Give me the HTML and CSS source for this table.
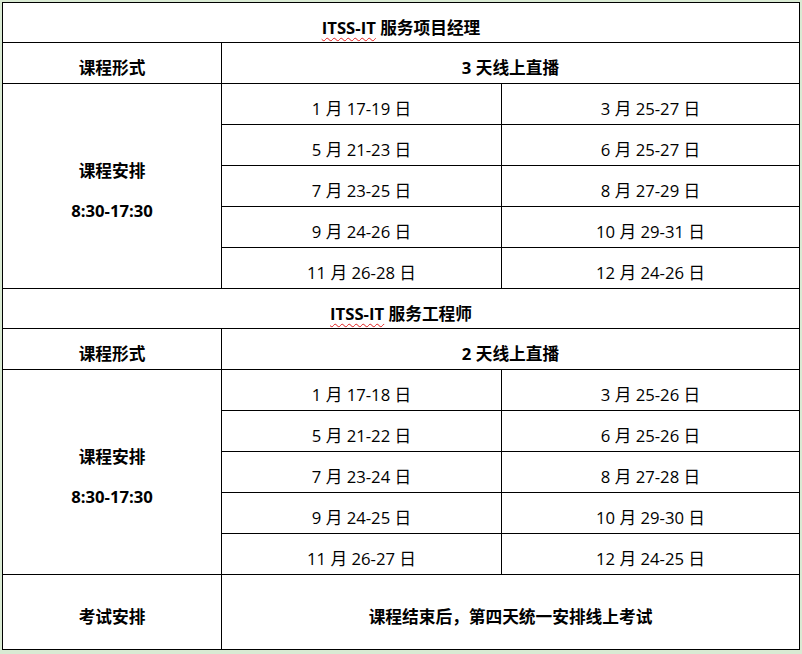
FILE: index.html
```html
<!DOCTYPE html>
<html lang="zh-CN">
<head>
<meta charset="utf-8">
<title>ITSS-IT 课程安排</title>
<link rel="stylesheet" href="styles.css">
</head>
<body>
<div class="sheet">
  <div class="cell title span3"><span class="sq">ITSS-IT</span>&nbsp;服务项目经理</div>
  <div class="cell bold">课程形式</div>
  <div class="cell bold span2">3 天线上直播</div>
  <div class="cell bold sched span5"><div>课程安排</div><div>8:30-17:30</div></div>
  <div class="cell">1 月 17-19 日</div><div class="cell">3 月 25-27 日</div>
  <div class="cell">5 月 21-23 日</div><div class="cell">6 月 25-27 日</div>
  <div class="cell">7 月 23-25 日</div><div class="cell">8 月 27-29 日</div>
  <div class="cell">9 月 24-26 日</div><div class="cell">10 月 29-31 日</div>
  <div class="cell">11 月 26-28 日</div><div class="cell">12 月 24-26 日</div>

  <div class="cell title span3"><span class="sq">ITSS-IT</span>&nbsp;服务工程师</div>
  <div class="cell bold">课程形式</div>
  <div class="cell bold span2">2 天线上直播</div>
  <div class="cell bold sched span5"><div>课程安排</div><div>8:30-17:30</div></div>
  <div class="cell">1 月 17-18 日</div><div class="cell">3 月 25-26 日</div>
  <div class="cell">5 月 21-22 日</div><div class="cell">6 月 25-26 日</div>
  <div class="cell">7 月 23-24 日</div><div class="cell">8 月 27-28 日</div>
  <div class="cell">9 月 24-25 日</div><div class="cell">10 月 29-30 日</div>
  <div class="cell">11 月 26-27 日</div><div class="cell">12 月 24-25 日</div>

  <div class="cell bold">考试安排</div>
  <div class="cell bold span2">课程结束后，第四天统一安排线上考试</div>
</div>
</body>
</html>
```
FILE: styles.css
```css
html, body {
  margin: 0;
  padding: 0;
}
body {
  background: #d9ead3;
  padding: 2px 0 0 2px;
  font-family: "Open Sans", "Noto Sans CJK SC", sans-serif;
  font-size: 16.7px;
  color: #000;
}
.sheet {
  display: grid;
  width: max-content;
  grid-template-columns: 218px 279px 297px;
  grid-template-rows: 39px 40px repeat(5, 40px) 39px 40px repeat(5, 40px) 74px;
  gap: 1px;
  padding: 1px;
  background: #000;
}
.cell {
  background: #fff;
  display: flex;
  align-items: center;
  justify-content: center;
  padding-top: 10px;
  box-sizing: border-box;
  line-height: 1;
  white-space: nowrap;
}
.bold, .title {
  font-weight: bold;
}
.title {
  padding-top: 11px;
}
.span3 { grid-column: span 3; }
.span2 { grid-column: span 2; }
.span5 { grid-row: span 5; }
.sched {
  flex-direction: column;
  gap: 23px;
}
.sq {
  text-decoration: underline wavy #e02020;
  text-decoration-thickness: 1px;
  text-underline-offset: 3px;
}
```
